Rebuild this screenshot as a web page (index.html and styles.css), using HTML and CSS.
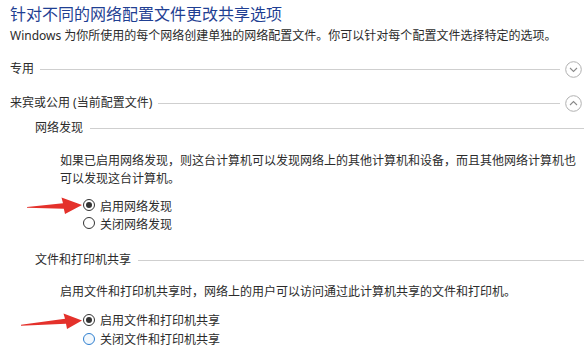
FILE: index.html
```html
<!DOCTYPE html>
<html lang="zh-CN">
<head>
<meta charset="utf-8">
<title>高级共享设置</title>
<link rel="stylesheet" href="styles.css">
</head>
<body>
<div class="page">
  <h1 class="title">针对不同的网络配置文件更改共享选项</h1>
  <p class="intro">Windows 为你所使用的每个网络创建单独的网络配置文件。你可以针对每个配置文件选择特定的选项。</p>

  <div class="group-header first">
    <span class="label">专用</span>
    <span class="rule"></span>
    <svg class="chev" width="17" height="17" viewBox="0 0 17 17"><circle cx="8.5" cy="8.5" r="7.8" fill="none" stroke="#b0b0b0" stroke-width="1"/><path d="M5 7 L8.5 10.5 L12 7" fill="none" stroke="#8a8a8a" stroke-width="1.1"/></svg>
  </div>

  <div class="group-header">
    <span class="label">来宾或公用 (当前配置文件)</span>
    <span class="rule"></span>
    <svg class="chev" width="17" height="17" viewBox="0 0 17 17"><circle cx="8.5" cy="8.5" r="7.8" fill="none" stroke="#b0b0b0" stroke-width="1"/><path d="M5 10 L8.5 6.5 L12 10" fill="none" stroke="#8a8a8a" stroke-width="1.1"/></svg>
  </div>

  <div class="section">
    <div class="section-header">
      <span class="label">网络发现</span>
      <span class="rule"></span>
    </div>
    <p class="desc wide">如果已启用网络发现，则这台计算机可以发现网络上的其他计算机和设备，而且其他网络计算机也可以发现这台计算机。</p>
    <div class="options">
      <div class="option"><span class="radio checked"></span><span>启用网络发现</span></div>
      <div class="option"><span class="radio"></span><span>关闭网络发现</span></div>
    </div>
  </div>

  <div class="section second">
    <div class="section-header">
      <span class="label">文件和打印机共享</span>
      <span class="rule"></span>
    </div>
    <p class="desc">启用文件和打印机共享时，网络上的用户可以访问通过此计算机共享的文件和打印机。</p>
    <div class="options tall">
      <div class="option"><span class="radio checked"></span><span>启用文件和打印机共享</span></div>
      <div class="option"><span class="radio hover"></span><span>关闭文件和打印机共享</span></div>
    </div>
  </div>

  <svg class="arrows" width="584" height="352" viewBox="0 0 584 352">
    <polygon points="27,205 63,201.3 61.5,195.5 82,203 65,212 63.8,206.8 27,205.8" fill="#e4312b"/>
    <polygon points="21,322.8 65,316.8 63.5,311.5 82,318.5 67,327 66,321.8 21,323.8" fill="#e4312b"/>
  </svg>
</div>
</body>
</html>
```
FILE: styles.css
```css
html, body {
  margin: 0;
  padding: 0;
  background: #ffffff;
}

body {
  width: 584px;
  height: 352px;
  overflow: hidden;
  font-family: "Noto Sans", "Noto Sans CJK SC", sans-serif;
  color: #2b2b2b;
  font-size: 12px;
}

.page {
  position: relative;
  padding-left: 10px;
  height: 352px;
}

.title {
  margin: 2px 0 0 0;
  font-size: 16px;
  line-height: 22px;
  font-weight: normal;
  color: #1f3f93;
  font-family: "Noto Sans CJK SC", sans-serif;
}

.intro {
  margin: 3px 0 0 0;
  font-size: 12px;
  line-height: 18px;
  font-family: "Noto Sans", "Noto Sans CJK SC", sans-serif;
}

.group-header {
  display: flex;
  align-items: center;
  height: 20px;
  margin-top: 14px;
  padding-right: 2px;
}

.label {
  font-family: "Noto Sans", "Noto Sans CJK SC", sans-serif;
  font-size: 12px;
  line-height: 20px;
  white-space: nowrap;
}

.rule {
  flex: 1;
  height: 0;
  border-top: 1px solid #cfcfcf;
  margin: 0 5px 0 6px;
}

.chev {
  display: block;
  flex: none;
}

.section {
  padding-left: 25px;
  margin-top: 5px;
}

.section.second {
  margin-top: 18px;
}

.section-header {
  display: flex;
  align-items: center;
  height: 20px;
}

.section-header .rule {
  margin: 0 0 0 7px;
}

.desc {
  margin: 12px 0 0 25px;
  font-size: 12px;
  line-height: 18px;
  font-family: "Noto Sans CJK SC", sans-serif;
  width: 520px;
}

.desc.wide {
  margin-top: 13px;
}

.options {
  margin: 9px 0 0 48px;
}

.options.tall {
  margin-top: 10px;
}

.option {
  display: flex;
  align-items: center;
  height: 18px;
  font-family: "Noto Sans CJK SC", sans-serif;
  font-size: 12px;
}

.options.tall .option {
  height: 19px;
}

.radio {
  box-sizing: border-box;
  width: 12px;
  height: 12px;
  border: 1px solid #333333;
  border-radius: 50%;
  margin-right: 5px;
  flex: none;
  display: flex;
  align-items: center;
  justify-content: center;
  background: #ffffff;
}

.radio.checked::after {
  content: "";
  width: 6px;
  height: 6px;
  border-radius: 50%;
  background: #333333;
}

.radio.hover {
  border-color: #2f7fd0;
  background: #f2f8fd;
}

.arrows {
  position: absolute;
  top: 0;
  left: 0;
  pointer-events: none;
}
```
